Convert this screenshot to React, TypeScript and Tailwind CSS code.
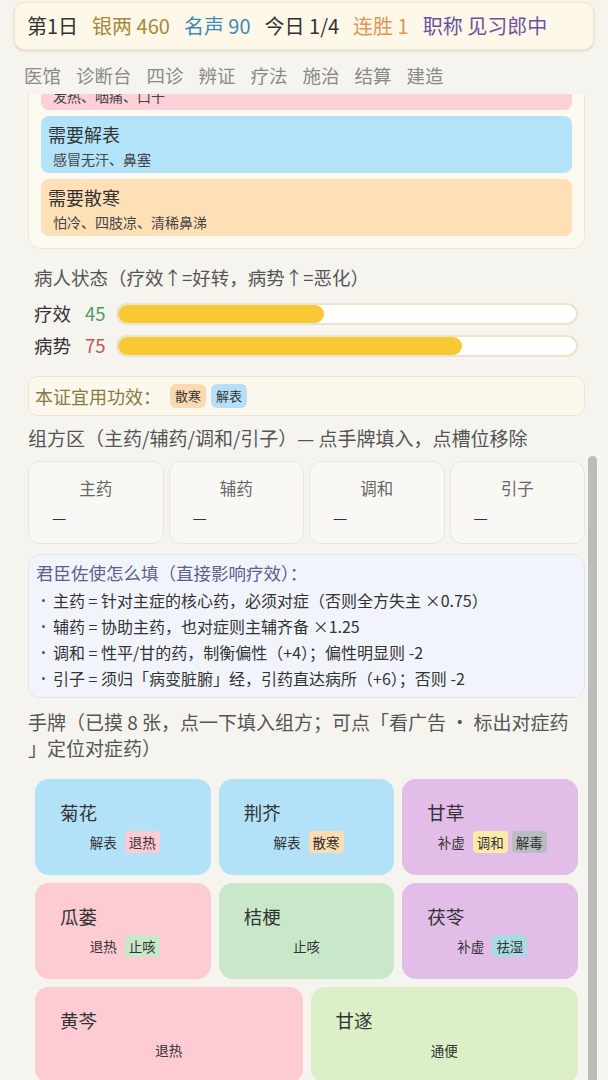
import React from "react";

const FONT = { fontFamily: '"Noto Sans CJK SC", "Noto Sans", sans-serif' };

const EFFECT_BG: Record<string, string> = {
  解表: "bg-[#b3e2f8]",
  退热: "bg-[#fdcbd4]",
  散寒: "bg-[#fddcb0]",
  补虚: "bg-[#e1bde8]",
  调和: "bg-[#fde9a8]",
  解毒: "bg-[#b8bdc2]",
  止咳: "bg-[#c9e8ca]",
  祛湿: "bg-[#a8dbe2]",
  通便: "bg-[#dcefc7]",
};

const hand = [
  { name: "菊花", tags: ["解表", "退热"] },
  { name: "荆芥", tags: ["解表", "散寒"] },
  { name: "甘草", tags: ["补虚", "调和", "解毒"] },
  { name: "瓜蒌", tags: ["退热", "止咳"] },
  { name: "桔梗", tags: ["止咳"] },
  { name: "茯苓", tags: ["补虚", "祛湿"] },
  { name: "黄芩", tags: ["退热"] },
  { name: "甘遂", tags: ["通便"] },
];

const needs = [
  { title: "需要清热", desc: "发热、咽痛、口干", bg: "bg-[#fdcfd7]" },
  { title: "需要解表", desc: "感冒无汗、鼻塞", bg: "bg-[#b3e3f8]" },
  { title: "需要散寒", desc: "怕冷、四肢凉、清稀鼻涕", bg: "bg-[#fde0b5]" },
];

const rules = [
  "主药 = 针对主症的核心药，必须对症（否则全方失主 ×0.75）",
  "辅药 = 协助主药，也对症则主辅齐备 ×1.25",
  "调和 = 性平/甘的药，制衡偏性（+4）；偏性明显则 -2",
  "引子 = 须归「病变脏腑」经，引药直达病所（+6）；否则 -2",
];

function Bar({ label, value, color }: { label: string; value: number; color: string }) {
  return (
    <div className="flex items-center h-[22px]">
      <span className="w-[51px] text-[18.5px] text-[#333]">{label}</span>
      <span className={`w-[31px] text-[18.5px] ${color}`}>{value}</span>
      <div className="flex-1 h-[22px] rounded-full border-2 border-[#ebe4c6] bg-white overflow-hidden">
        <div className="h-full rounded-full bg-[#f7c934]" style={{ width: `${value}%` }} />
      </div>
    </div>
  );
}

export default function App() {
  return (
    <div className="relative h-[1080px] overflow-hidden bg-[#f6f4ef]" style={FONT}>
      {/* stats */}
      <div className="mx-[14px] mt-[2px] h-[48px] flex items-center gap-[14px] px-[12px] rounded-[10px] border border-[#efe7cb] bg-[#fdf8e7] shadow-sm text-[20px]">
        <span className="text-[#333]">第1日</span>
        <span className="text-[#a58b3b]">银两 460</span>
        <span className="text-[#3b8cb8]">名声 90</span>
        <span className="text-[#333]">今日 1/4</span>
        <span className="text-[#e59553]">连胜 1</span>
        <span className="text-[#6b52a3]">职称 见习郎中</span>
      </div>

      {/* tabs */}
      <div className="flex gap-[15px] px-[24px] pt-[14px] pb-[8px] text-[18.5px] leading-[22px] text-[#8a8a8a]">
        {["医馆", "诊断台", "四诊", "辨证", "疗法", "施治", "结算", "建造"].map((t) => (
          <span key={t}>{t}</span>
        ))}
      </div>

      {/* scrolled content */}
      <div className="h-[986px] overflow-hidden pl-[28px] pr-[23px]">
        <div className="-mt-[54px]">
          <div className="rounded-xl border border-[#ece6d6] bg-[#fcf9f1] p-3 flex flex-col gap-[6px]">
            {needs.map((n) => (
              <div key={n.title} className={`rounded-lg px-[7px] pt-[6px] pb-[5px] ${n.bg}`}>
                <div className="text-[18px] leading-[24px] text-[#333]">{n.title}</div>
                <div className="mt-[4px] pl-[5px] text-[14px] leading-[18px] text-[#444]">{n.desc}</div>
              </div>
            ))}
          </div>

          <div className="pl-[6px] pr-[7px] mt-[15px]">
            <div className="text-[18.5px] leading-[26px] text-[#555]">病人状态（疗效↑=好转，病势↑=恶化）</div>
            <div className="mt-[13px] flex flex-col gap-[10px]">
              <Bar label="疗效" value={45} color="text-[#4f9b62]" />
              <Bar label="病势" value={75} color="text-[#c45652]" />
            </div>
          </div>

          <div className="mt-[19px] h-[40px] flex items-center gap-[5px] px-[6px] rounded-[10px] border border-[#ede6d2] bg-[#fcf8ed]">
            <span className="text-[18px] text-[#8a7a42] mr-[4px]">本证宜用功效：</span>
            <span className="rounded-md px-[5px] leading-[24px] text-[13px] text-[#333] bg-[#fdd9b2]">散寒</span>
            <span className="rounded-md px-[5px] leading-[24px] text-[13px] text-[#333] bg-[#b5e0f7]">解表</span>
          </div>

          <div className="mt-[9px] text-[19px] leading-[26px] text-[#555]">
            组方区（主药/辅药/调和/引子）— 点手牌填入，点槽位移除
          </div>

          <div className="mt-[10px] grid grid-cols-4 gap-[5px]">
            {["主药", "辅药", "调和", "引子"].map((s) => (
              <div key={s} className="h-[83px] rounded-xl border border-[#e9e6df] bg-[#f9f8f5] pt-[14px]">
                <div className="text-center text-[16.5px] leading-[24px] text-[#666]">{s}</div>
                <div className="mt-[5px] px-[23px] text-[16px] leading-[24px] text-[#333]">—</div>
              </div>
            ))}
          </div>

          <div className="mt-[10px] rounded-xl border border-[#e0e6ee] bg-[#f1f5fb] px-[7px] pt-[7px] pb-[6px]">
            <div className="text-[17.5px] leading-[22px] text-[#5b6190]">君臣佐使怎么填（直接影响疗效）：</div>
            <ul className="mt-[3px]">
              {rules.map((r) => (
                <li key={r} className="flex items-center text-[16px] leading-[26px] text-[#333]">
                  <span className="ml-[6px] mr-[8px] w-[3px] h-[3px] rounded-full bg-[#555]" />
                  <span>{r}</span>
                </li>
              ))}
            </ul>
          </div>

          <div className="mt-[11px] text-[19px] leading-[26px] text-[#555]">
            手牌（已摸 8 张，点一下填入组方；可点「看广告 · 标出对症药
            <br />」定位对症药）
          </div>

          <div className="mt-[18px] px-[7px] flex flex-wrap gap-[8px]">
            {hand.map((c) => (
              <div
                key={c.name}
                className={`basis-[170px] grow rounded-[14px] pt-[22px] pb-[22px] px-[25px] ${EFFECT_BG[c.tags[0]]}`}
              >
                <div className="text-[18.5px] leading-[22px] text-[#333]">{c.name}</div>
                <div className="mt-[8px] flex justify-center gap-[4px]">
                  {c.tags.map((t) => (
                    <span key={t} className={`rounded-[4px] px-[4px] text-[13.5px] leading-[22px] text-[#333] ${EFFECT_BG[t]}`}>
                      {t}
                    </span>
                  ))}
                </div>
              </div>
            ))}
          </div>
        </div>
      </div>

      {/* scrollbar thumb */}
      <div className="absolute left-[588px] top-[456px] w-[9px] h-[640px] rounded-full bg-[#bcbcbc]" />
    </div>
  );
}
